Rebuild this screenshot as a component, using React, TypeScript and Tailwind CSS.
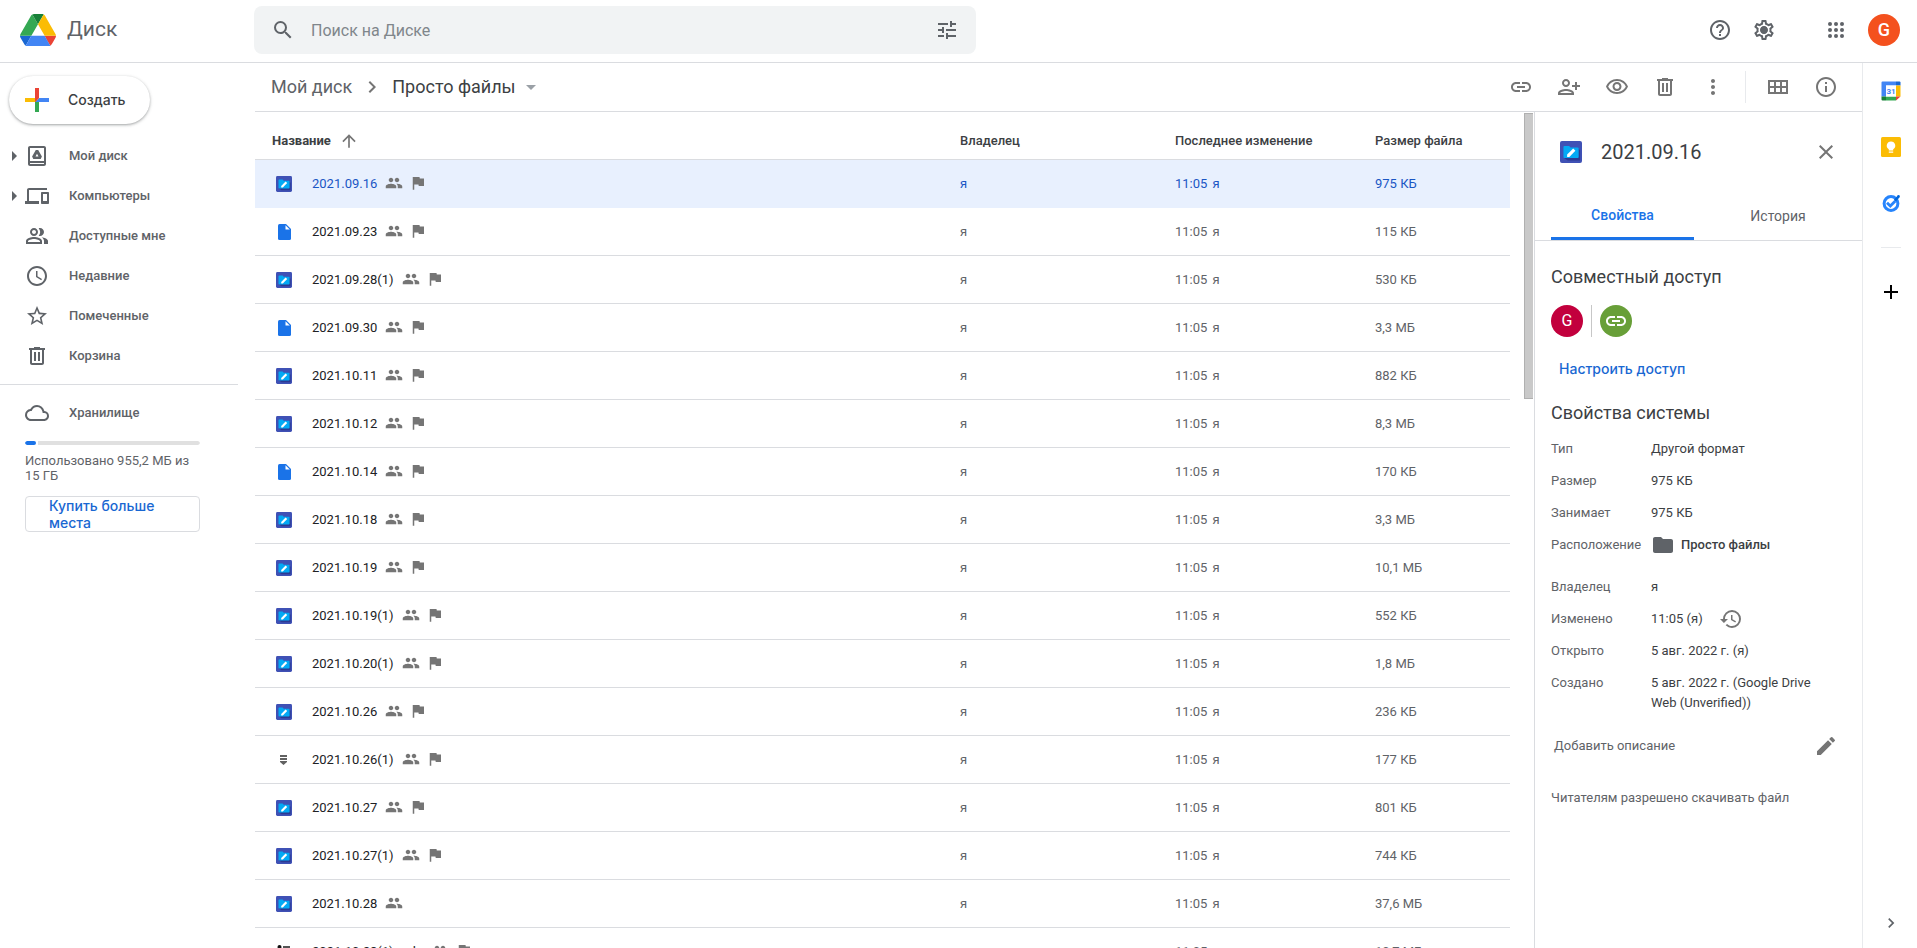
import type { ReactNode } from "react";
import {
  MdAccessTime,
  MdArrowDropDown,
  MdArrowUpward,
  MdChevronRight,
  MdClose,
  MdDevices,
  MdEdit,
  MdFlag,
  MdFolder,
  MdHelpOutline,
  MdHistory,
  MdInfoOutline,
  MdLink,
  MdMoreVert,
  MdOutlineCloud,
  MdOutlinePeopleAlt,
  MdOutlinePersonAddAlt1,
  MdOutlineSettings,
  MdOutlineVisibility,
  MdPeople,
  MdSearch,
  MdStarBorder,
  MdTune,
} from "react-icons/md";

type FileKind = "paint" | "doc" | "archive" | "canvas";

interface DriveFile {
  name: string;
  size: string;
  kind: FileKind;
  flagged: boolean;
}

const files: DriveFile[] = [
  { name: "2021.09.16", size: "975 КБ", kind: "paint", flagged: true },
  { name: "2021.09.23", size: "115 КБ", kind: "doc", flagged: true },
  { name: "2021.09.28(1)", size: "530 КБ", kind: "paint", flagged: true },
  { name: "2021.09.30", size: "3,3 МБ", kind: "doc", flagged: true },
  { name: "2021.10.11", size: "882 КБ", kind: "paint", flagged: true },
  { name: "2021.10.12", size: "8,3 МБ", kind: "paint", flagged: true },
  { name: "2021.10.14", size: "170 КБ", kind: "doc", flagged: true },
  { name: "2021.10.18", size: "3,3 МБ", kind: "paint", flagged: true },
  { name: "2021.10.19", size: "10,1 МБ", kind: "paint", flagged: true },
  { name: "2021.10.19(1)", size: "552 КБ", kind: "paint", flagged: true },
  { name: "2021.10.20(1)", size: "1,8 МБ", kind: "paint", flagged: true },
  { name: "2021.10.26", size: "236 КБ", kind: "paint", flagged: true },
  { name: "2021.10.26(1)", size: "177 КБ", kind: "archive", flagged: true },
  { name: "2021.10.27", size: "801 КБ", kind: "paint", flagged: true },
  { name: "2021.10.27(1)", size: "744 КБ", kind: "paint", flagged: true },
  { name: "2021.10.28", size: "37,6 МБ", kind: "paint", flagged: false },
  { name: "2021.10.28(1).mdp", size: "10,7 МБ", kind: "canvas", flagged: true },
];

const DriveLogo = () => (
  <svg viewBox="0 0 87.3 78" className="w-9">
    <path fill="#1967d2" d="m6.6 66.85 3.85 6.65c.8 1.4 1.95 2.5 3.3 3.3l13.75-23.8h-27.5c0 1.55.4 3.1 1.2 4.5z" />
    <path fill="#34a853" d="m43.65 25-13.75-23.8c-1.35.8-2.5 1.9-3.3 3.3l-25.4 44a9.06 9.06 0 0 0 -1.2 4.5h27.5z" />
    <path fill="#ea4335" d="m73.55 76.8c1.35-.8 2.5-1.9 3.3-3.3l1.6-2.75 7.65-13.25c.8-1.4 1.2-2.95 1.2-4.5h-27.5l5.85 11.5z" />
    <path fill="#188038" d="m43.65 25 13.75-23.8c-1.35-.8-2.9-1.2-4.5-1.2h-18.5c-1.6 0-3.15.45-4.5 1.2z" />
    <path fill="#4285f4" d="m59.8 53h-32.3l-13.75 23.8c1.35.8 2.9 1.2 4.5 1.2h50.8c1.6 0 3.15-.45 4.5-1.2z" />
    <path fill="#fbbc04" d="m73.4 26.5-12.7-22c-.8-1.4-1.95-2.5-3.3-3.3l-13.75 23.8 16.15 28h27.45c0-1.55-.4-3.1-1.2-4.5z" />
  </svg>
);

const PlusIcon = () => (
  <svg viewBox="0 0 36 36" className="size-9">
    <path fill="#34a853" d="M16 16v14h4V20z" />
    <path fill="#4285f4" d="M30 16H20l-4 4h14z" />
    <path fill="#fbbc04" d="M6 16v4h10l4-4z" />
    <path fill="#ea4335" d="M20 16V6h-4v14z" />
  </svg>
);

const TrashIcon = () => (
  <svg viewBox="0 0 24 24" fill="currentColor" className="size-6">
    <path d="M15 4V3H9v1H4v2h1v13c0 1.1.9 2 2 2h10c1.1 0 2-.9 2-2V6h1V4h-5zm2 15H7V6h10v13z" />
    <path d="M9 8h2v9H9zm4 0h2v9h-2z" />
  </svg>
);

const MyDriveIcon = () => (
  <svg viewBox="0 0 24 24" fill="currentColor" fillRule="evenodd" className="size-6">
    <path d="M19 2H5c-1.1 0-2 .9-2 2v16c0 1.1.9 2 2 2h14c1.1 0 2-.9 2-2V4c0-1.1-.9-2-2-2zm0 18H5v-1h14v1zm0-3H5V4h14v13z" />
    <path d="M13.2 6h-2.4L7.1 12.4 8.3 15h7.4l1.2-2.6zM10.5 12.4 12 9.8l1.5 2.6z" />
  </svg>
);

const GearIcon = () => (
  <span className="grid">
    <MdOutlineSettings className="size-6 col-start-1 row-start-1" />
    <svg viewBox="0 0 24 24" fill="currentColor" className="size-6 col-start-1 row-start-1">
      <circle cx="12" cy="12" r="3.4" />
    </svg>
  </span>
);

const AppsIcon = () => (
  <svg viewBox="0 0 24 24" fill="currentColor" className="size-6">
    {[6, 12, 18].map((cy) => [6, 12, 18].map((cx) => <circle key={`${cx}-${cy}`} cx={cx} cy={cy} r="2" />))}
  </svg>
);

const GridIcon = () => (
  <svg viewBox="0 0 24 24" fill="currentColor" fillRule="evenodd" className="size-6">
    <path d="M2 5h20v14H2zM4 7v4h4V7zm6 0v4h4V7zm6 0v4h4V7zM4 13v4h4v-4zm6 0v4h4v-4zm6 0v4h4v-4z" />
  </svg>
);

const PaintIcon = ({ className }: { className: string }) => (
  <svg viewBox="0 0 16 16" className={className}>
    <rect width="16" height="16" rx="1.4" fill="#3f51b5" />
    <path fill="#2c3a92" d="M13.2 5.4 14.6 6.8V14.2H5.6L3 12.4z" />
    <path fill="#03a9f4" d="M3.2 3.6h3.4l1.1 1.1h5.200q.7 0 .7.7v6.300q0 .7-.7.7H3.200q-.7 0-.7-.7V4.300q0-.7.7-.7z" />
    <path fill="#fff" d="M5.200 11.600v-1.700L9.600 5.500l1.600 1.600-4.400 4.500z" />
  </svg>
);

const FileIcon = ({ kind }: { kind: FileKind }) => {
  if (kind === "paint") return <PaintIcon className="size-4" />;
  if (kind === "doc")
    return (
      <svg viewBox="0 0 16 16" className="size-4">
        <path fill="#1a73e8" d="M3.500 0H10l5 5v9.500q0 1.500-1.500 1.500h-10Q2 16 2 14.500v-13Q2 0 3.500 0z" />
        <path fill="#fff" d="M9.500 1.200V5.500h4.300z" />
      </svg>
    );
  if (kind === "archive")
    return (
      <svg viewBox="0 0 16 16" fill="#616161" className="size-4">
        <path d="M4 3h7v2H4zm0 3h7v2H4zm0 3h7v1l-3.500 3L4 10z" />
      </svg>
    );
  return (
    <svg viewBox="0 0 16 16" className="size-4">
      <circle cx="3.500" cy="3" r="2" fill="#111" />
      <path fill="#555" d="M7 2h7v2H7z" />
      <path fill="#111" d="M2 5h3v9H2z" />
    </svg>
  );
};

const CalendarIcon = () => (
  <svg viewBox="0 0 20 20" className="size-5">
    <path fill="#4285f4" d="M1.500.5H15v4H5v11H.5v-14q0-1 1-1z" />
    <path fill="#1967d2" d="M15 .5h3.500q1 0 1 1v3H15z" />
    <path fill="#fbbc04" d="M15 4.500h4.500v11H15z" />
    <path fill="#34a853" d="M5 15.500h10v4H5z" />
    <path fill="#188038" d="M.5 15.500H5v4H1.500q-1 0-1-1z" />
    <path fill="#ea4335" d="M15 15.500h4.500l-4.500 4z" />
    <path fill="#fff" d="M5 4.500h10v11H5z" />
    <text x="10" y="13" textAnchor="middle" fontSize="8" fontWeight="700" fontFamily="Roboto, sans-serif" fill="#4285f4">
      31
    </text>
  </svg>
);

const KeepIcon = () => (
  <svg viewBox="0 0 20 20" className="size-5">
    <rect width="20" height="20" rx="1.500" fill="#fbbc04" />
    <path fill="#fff" d="M10 4.500a4.200 4.200 0 0 0-2.200 7.800V13.500h4.400V12.300A4.200 4.200 0 0 0 10 4.500zM7.800 14.500h4.400v1.300H7.800z" />
  </svg>
);

const TasksIcon = () => (
  <svg viewBox="0 0 20 20" fill="none" className="size-5">
    <circle cx="10" cy="10.500" r="6.900" stroke="#2684fc" strokeWidth="3" />
    <path stroke="#2684fc" strokeWidth="2.800" d="m6 9.700 3.300 3.300 5-5" />
    <path stroke="#0066da" strokeWidth="2.600" d="m13.800 7.600 3.700-4" />
    <circle cx="17.500" cy="3.400" r="1.300" fill="#0066da" />
  </svg>
);

const IconButton = ({ label, children }: { label: string; children: ReactNode }) => (
  <button aria-label={label} className="flex size-12 shrink-0 items-center justify-center text-2xl">
    {children}
  </button>
);

const Header = () => (
  <header className="flex h-[63px] shrink-0 items-center border-b border-[#dadce0] pb-[2px] text-[#5f6368]">
    <a href="#" className="flex w-[254px] shrink-0 items-center gap-[11px] pl-5">
      <DriveLogo />
      <span className="text-[21px]">Диск</span>
    </a>
    <form className="flex h-12 min-w-0 max-w-[722px] flex-1 items-center rounded-lg bg-[#f1f3f4] px-[17px]">
      <button type="button" aria-label="Найти" className="text-2xl">
        <MdSearch />
      </button>
      <input
        type="text"
        aria-label="Поиск на Диске"
        placeholder="Поиск на Диске"
        className="min-w-0 flex-1 bg-transparent px-4 pt-[2px] text-base outline-none placeholder:text-[#80868b]"
      />
      <button type="button" aria-label="Параметры поиска" className="text-2xl">
        <MdTune />
      </button>
    </form>
    <div className="ml-auto flex items-center pr-[17px]">
      <div className="flex items-center gap-5">
        <button aria-label="Справка" className="text-2xl">
          <MdHelpOutline />
        </button>
        <button aria-label="Настройки">
          <GearIcon />
        </button>
      </div>
      <button aria-label="Приложения Google" className="ml-12">
        <AppsIcon />
      </button>
      <button aria-label="Аккаунт" className="ml-5 flex size-8 items-center justify-center rounded-full bg-[#f4511e] text-lg font-medium text-white">
        G
      </button>
    </div>
  </header>
);

const navItems = [
  { label: "Мой диск", icon: <MyDriveIcon />, expandable: true },
  { label: "Компьютеры", icon: <MdDevices />, expandable: true },
  { label: "Доступные мне", icon: <MdOutlinePeopleAlt />, expandable: false },
  { label: "Недавние", icon: <MdAccessTime />, expandable: false },
  { label: "Помеченные", icon: <MdStarBorder />, expandable: false },
  { label: "Корзина", icon: <TrashIcon />, expandable: false },
];

const NavItem = ({ label, icon, expandable }: { label: string; icon: ReactNode; expandable: boolean }) => (
  <a href="#" className="flex h-10 items-center text-[13px] font-medium text-[#5f6368]">
    <span className="flex w-[25px] pl-3">
      {expandable && (
        <svg viewBox="0 0 5 10" fill="currentColor" className="h-[10px] w-[5px]">
          <path d="M0 0l5 5-5 5z" />
        </svg>
      )}
    </span>
    <span className="text-2xl">{icon}</span>
    <span className="pl-5">{label}</span>
  </a>
);

const Sidebar = () => (
  <aside className="w-[255px] shrink-0 pt-[13px]">
    <button className="ml-[9px] flex h-12 items-center rounded-full pr-6 pl-[10px] font-['Inter'] text-sm font-medium text-[#3c4043] shadow-[0_1px_2px_0_rgba(60,64,67,0.30),0_1px_3px_1px_rgba(60,64,67,0.15)]">
      <PlusIcon />
      <span className="pl-[13px]">Создать</span>
    </button>
    <nav className="mt-3">
      {navItems.map((item) => (
        <NavItem key={item.label} {...item} />
      ))}
    </nav>
    <div className="mt-2 mr-[17px] border-t border-[#dadce0] pt-2">
      <NavItem label="Хранилище" icon={<MdOutlineCloud />} expandable={false} />
      <div className="mr-[38px] ml-[25px] pt-2">
        <div className="flex h-1 gap-[2px] overflow-hidden rounded-full">
          <div className="w-[11px] rounded-full bg-[#1a73e8]"></div>
          <div className="flex-1 rounded-r-full bg-[#e0e0e0]"></div>
        </div>
        <p className="mt-2 text-[13px] leading-[15px] text-[#5f6368]">Использовано 955,2 МБ из 15 ГБ</p>
        <button className="mt-[13px] w-full rounded border border-[#dadce0] px-[23px] text-left font-['Inter'] text-sm leading-[17px] font-medium text-[#1967d2]">
          Купить больше места
        </button>
      </div>
    </div>
  </aside>
);

const Toolbar = () => (
  <div className="flex h-[49px] shrink-0 items-center border-b border-[#dadce0] pr-3 pl-4">
    <nav className="flex items-center text-lg text-[#3c4043]">
      <a href="#" className="text-[#5f6368]">Мой диск</a>
      <MdChevronRight className="mx-2 text-2xl text-[#757575]" />
      <button className="flex items-center">
        Просто файлы
        <MdArrowDropDown className="ml-[3px] text-2xl text-[#9aa0a6]" />
      </button>
    </nav>
    <div className="ml-auto flex items-center text-[#757575]">
      <IconButton label="Получить ссылку"><MdLink /></IconButton>
      <IconButton label="Открыть доступ"><MdOutlinePersonAddAlt1 /></IconButton>
      <IconButton label="Предварительный просмотр"><MdOutlineVisibility /></IconButton>
      <IconButton label="Удалить"><TrashIcon /></IconButton>
      <IconButton label="Другие действия"><MdMoreVert /></IconButton>
      <div className="mx-2 h-8 w-px bg-[#e8eaed]"></div>
      <IconButton label="Сетка"><GridIcon /></IconButton>
      <IconButton label="Показать свойства"><MdInfoOutline /></IconButton>
    </div>
  </div>
);

const FileTable = () => (
  <table className="w-full table-fixed border-separate border-spacing-0 text-left text-[13px]">
    <colgroup>
      <col />
      <col className="w-[215px]" />
      <col className="w-[200px]" />
      <col className="w-[135px]" />
    </colgroup>
    <thead className="text-[#3c4043]">
      <tr className="h-12 *:border-b *:border-[#dadce0] *:pt-[10px] *:font-medium">
        <th>
          <button className="flex items-center gap-2 pl-[17px] font-bold">
            Название
            <MdArrowUpward className="text-xl text-[#757575]" />
          </button>
        </th>
        <th>Владелец</th>
        <th>Последнее изменение</th>
        <th>Размер файла</th>
      </tr>
    </thead>
    <tbody>
      {files.map((file, index) => (
        <tr
          key={file.name}
          className={
            index === 0
              ? "h-12 bg-[#e8f0fe] text-[#1a56c4] *:border-b *:border-[#e8f0fe]"
              : "h-12 text-[#5f6368] *:border-b *:border-[#dadce0]"
          }
        >
          <td>
            <div className="flex items-center pl-[21px]">
              <FileIcon kind={file.kind} />
              <span className={index === 0 ? "pt-px pl-5" : "pt-px pl-5 text-[#202124]"}>{file.name}</span>
              <span className="flex items-center gap-[6px] pb-[2px] pl-2 text-lg text-[#757575]">
                <MdPeople />
                {file.flagged && <MdFlag />}
              </span>
            </div>
          </td>
          <td>я</td>
          <td>
            <span className="flex gap-[5px]">
              <span>11:05</span>
              <span>я</span>
            </span>
          </td>
          <td>{file.size}</td>
        </tr>
      ))}
    </tbody>
  </table>
);

const Property = ({ label, children }: { label: string; children: ReactNode }) => (
  <div className="flex py-[6px] pr-6 leading-5">
    <dt className="w-[100px] shrink-0 text-[#5f6368]">{label}</dt>
    <dd className="flex items-center text-[#3c4043]">{children}</dd>
  </div>
);

const DetailsPanel = () => (
  <aside className="flex w-[328px] shrink-0 flex-col border-l border-[#dadce0] text-[13px]">
    <div className="flex h-20 items-center pr-3 pl-[25px]">
      <PaintIcon className="size-[22px]" />
      <h2 className="flex-1 pl-[19px] text-xl text-[#3c4043]">2021.09.16</h2>
      <IconButton label="Закрыть">
        <MdClose className="text-[#757575]" />
      </IconButton>
    </div>
    <div role="tablist" className="flex h-[49px] border-b border-[#dadce0] pl-4 text-sm">
      <button role="tab" aria-selected="true" className="w-[143px] border-b-[3px] border-[#1a73e8] font-medium text-[#1a73e8]">
        Свойства
      </button>
      <button role="tab" aria-selected="false" className="flex-1 text-[#5f6368]">
        История
      </button>
    </div>
    <div className="px-4 pt-6">
      <h3 className="text-lg leading-6 text-[#3c4043]">Совместный доступ</h3>
      <div className="mt-4 flex items-center">
        <span className="flex size-8 items-center justify-center rounded-full bg-[#c2003d] text-base text-white">G</span>
        <span className="mx-2 h-8 w-px bg-[#c7c7c7]"></span>
        <span className="flex size-8 items-center justify-center rounded-full bg-[#689f38] text-2xl text-white">
          <MdLink />
        </span>
      </div>
      <button className="mt-4 h-8 px-2 font-['Inter'] text-sm font-medium text-[#1967d2]">Настроить доступ</button>
      <h3 className="mt-4 text-lg leading-6 text-[#3c4043]">Свойства системы</h3>
      <dl className="mt-2">
        <Property label="Тип">Другой формат</Property>
        <Property label="Размер">975 КБ</Property>
        <Property label="Занимает">975 КБ</Property>
        <Property label="Расположение">
          <a href="#" className="flex items-center gap-[6px] font-medium">
            <MdFolder className="-my-[2px] text-2xl text-[#5f6368]" />
            Просто файлы
          </a>
        </Property>
      </dl>
      <dl className="mt-[10px]">
        <Property label="Владелец">я</Property>
        <Property label="Изменено">
          11:05 (я)
          <MdHistory className="-my-[2px] ml-4 text-2xl text-[#757575]" />
        </Property>
        <Property label="Открыто">5 авг. 2022 г. (я)</Property>
        <Property label="Создано">5 авг. 2022 г. (Google Drive Web (Unverified))</Property>
      </dl>
      <div className="mt-[15px] flex items-center justify-between pr-2 pl-[3px] text-[#5f6368]">
        <span>Добавить описание</span>
        <button aria-label="Изменить описание" className="text-2xl text-[#757575]">
          <MdEdit />
        </button>
      </div>
      <p className="mt-[30px] leading-5 text-[#5f6368]">Читателям разрешено скачивать файл</p>
    </div>
  </aside>
);

const AppRail = () => (
  <aside className="flex w-[55px] shrink-0 flex-col items-center border-l border-[#e8eaed] pl-px">
    <div className="flex flex-col items-center gap-9 pt-[18px]">
      <button aria-label="Календарь"><CalendarIcon /></button>
      <button aria-label="Keep"><KeepIcon /></button>
      <button aria-label="Tasks"><TasksIcon /></button>
    </div>
    <div className="mt-[34px] h-px w-5 bg-[#e8eaed]"></div>
    <button aria-label="Установить дополнения" className="mt-8">
      <svg viewBox="0 0 24 24" className="size-6">
        <path d="M11 5h2v6h6v2h-6v6h-2v-6H5v-2h6z" />
      </svg>
    </button>
    <button aria-label="Скрыть боковую панель" className="mt-auto mb-[15px] text-xl text-[#5f6368]">
      <MdChevronRight />
    </button>
  </aside>
);

export default function App() {
  return (
    <div className="flex h-screen flex-col overflow-hidden bg-white font-['Roboto',sans-serif]">
      <Header />
      <div className="flex min-h-0 flex-1">
        <Sidebar />
        <main className="flex min-w-0 flex-1 flex-col">
          <Toolbar />
          <div className="flex min-h-0 flex-1">
            <div className="min-w-0 flex-1 overflow-hidden pr-[14px]">
              <FileTable />
            </div>
            <div className="w-[10px] shrink-0 pt-px">
              <div className="h-[286px] w-[9px] border border-r-0 border-[#b0b0b0] bg-[#c9c9c9]"></div>
            </div>
            <DetailsPanel />
          </div>
        </main>
        <AppRail />
      </div>
    </div>
  );
}
